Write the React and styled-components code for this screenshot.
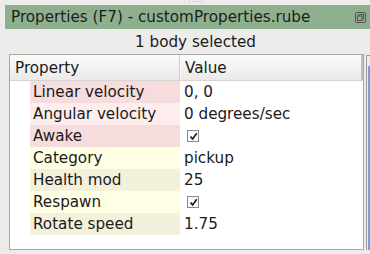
import React from 'react';
import styled, { createGlobalStyle } from 'styled-components';

const Global = createGlobalStyle`
  html, body {
    margin: 0;
    padding: 0;
    background: #edeceb;
    font-family: "DejaVu Sans", sans-serif;
    font-size: 15.2px;
    color: #1a1a1a;
  }
`;

const Page = styled.div`
  width: 370px;
  height: 254px;
  overflow: hidden;
  position: relative;
  background: #edeceb;
`;

const Grip = styled.div`
  position: absolute;
  left: 188px;
  top: 0;
  width: 16px;
  height: 3px;
  background-image: radial-gradient(circle, #b8b8b8 0.6px, transparent 0.8px);
  background-size: 3px 3px;
`;

const Dock = styled.div`
  padding: 5px 0 0 5px;
  display: flex;
  flex-direction: column;
`;

const TitleBar = styled.div`
  height: 24px;
  background: #8fb08f;
  display: flex;
  align-items: center;
  justify-content: space-between;
  padding: 0 4px 0 6px;
  color: #1c1c1c;
  white-space: nowrap;
`;

const FloatIcon = styled.svg`
  width: 11px;
  height: 11px;
  flex-shrink: 0;
`;

const Caption = styled.div`
  height: 25px;
  display: flex;
  align-items: center;
  justify-content: center;
  padding-left: 16px;
`;

const Body = styled.div`
  display: flex;
  padding-left: 4px;
  gap: 2px;
`;

const Frame = styled.div`
  width: 354px;
  height: 194px;
  border: 1px solid #a7a7a5;
  background: #fff;
  display: flex;
  flex-direction: column;
`;

const SideFrame = styled.div`
  margin-top: 1px;
  width: 6px;
  height: 194px;
  border-left: 1px solid #9c9c9c;
  border-top: 1px solid #9c9c9c;
  background: linear-gradient(to right, #7ba0d0 0 2px, transparent 2px);
  background-position: 1px 10px;
  background-repeat: no-repeat;
`;

const Header = styled.div`
  height: 25px;
  display: grid;
  grid-template-columns: 170px 183px;
  background: linear-gradient(#fbfbfa, #ebeae9);
  border-bottom: 1px solid #d4d4d2;
`;

const HeadCell = styled.div`
  display: flex;
  align-items: center;
  padding-left: ${(p) => p.$pad}px;
  border-right: 1px solid #c9c9c7;
  border-left: ${(p) => (p.$first ? 'none' : '1px solid #fff')};
  &:last-child {
    border-right: 2px solid #c0c0be;
  }
`;

const Rows = styled.div`
  display: flex;
  flex-direction: column;
  padding-left: 20px;
`;

const Row = styled.div`
  height: 22px;
  display: grid;
  grid-template-columns: 150px 183px;
`;

const NameCell = styled.div`
  background: ${(p) => p.$bg};
  display: flex;
  align-items: center;
  padding-left: 3px;
  white-space: nowrap;
`;

const ValueCell = styled.div`
  display: flex;
  align-items: center;
  padding-left: 4px;
  white-space: nowrap;
`;

const Check = styled.div`
  width: 10px;
  height: 10px;
  margin-left: 3px;
  border: 1px solid #8a8a8a;
  background: #fafafa;
  display: flex;
  align-items: center;
  justify-content: center;
`;

const Tick = () => (
  <svg width="9" height="9" viewBox="0 0 9 9">
    <path d="M1.5 4.5 L3.6 7 L7.8 1.3" fill="none" stroke="#111" strokeWidth="1.5" />
  </svg>
);

const rows = [
  { name: 'Linear velocity', value: '0, 0', bg: '#f6dcdc' },
  { name: 'Angular velocity', value: '0 degrees/sec', bg: '#fdeded' },
  { name: 'Awake', check: true, bg: '#f6dcdc' },
  { name: 'Category', value: 'pickup', bg: '#fefee5' },
  { name: 'Health mod', value: '25', bg: '#f3f1dc' },
  { name: 'Respawn', check: true, bg: '#fefee5' },
  { name: 'Rotate speed', value: '1.75', bg: '#f3f1dc' },
];

const App = () => (
  <Page>
    <Global />
    <Grip />
    <Dock>
      <TitleBar>
        Properties (F7) - customProperties.rube
        <FloatIcon viewBox="0 0 11 11">
          <rect x="0.5" y="0.5" width="10" height="10" rx="1.5" fill="none" stroke="#555" />
          <rect x="4" y="2.5" width="4.5" height="4.5" fill="none" stroke="#555" />
          <rect x="2.5" y="4" width="4.5" height="4.5" fill="#8fb08f" stroke="#555" />
        </FloatIcon>
      </TitleBar>
      <Caption>1 body selected</Caption>
      <Body>
        <Frame>
          <Header>
            <HeadCell $first $pad={5}>Property</HeadCell>
            <HeadCell $pad={4}>Value</HeadCell>
          </Header>
          <Rows>
            {rows.map((r) => (
              <Row key={r.name}>
                <NameCell $bg={r.bg}>{r.name}</NameCell>
                <ValueCell>
                  {r.check ? (
                    <Check>
                      <Tick />
                    </Check>
                  ) : (
                    r.value
                  )}
                </ValueCell>
              </Row>
            ))}
          </Rows>
        </Frame>
        <SideFrame />
      </Body>
    </Dock>
  </Page>
);

export default App;
